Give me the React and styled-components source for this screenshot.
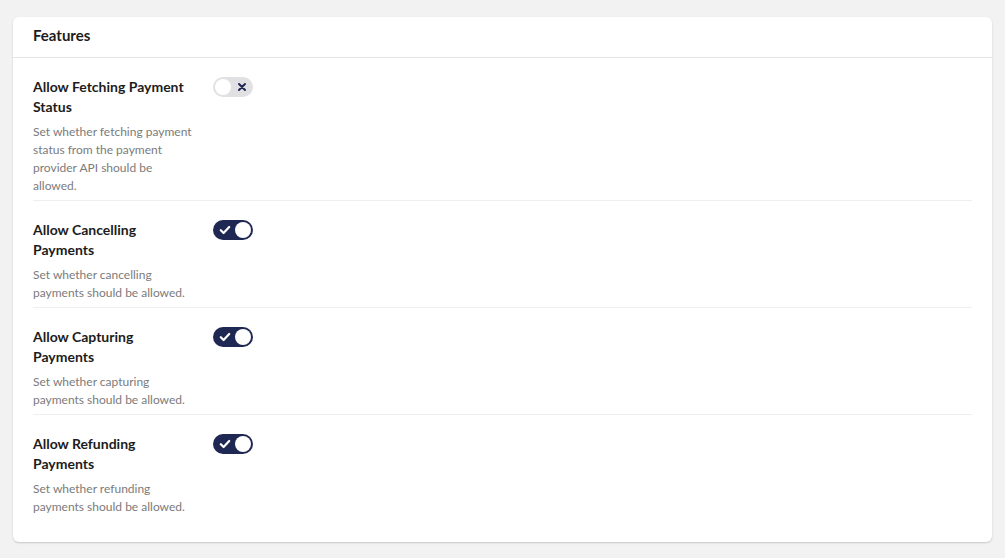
import styled, { createGlobalStyle } from "styled-components";

const GlobalStyle = createGlobalStyle`
	body {
		margin: 0;
		background: #f3f2f2;
		font-family: Lato, "Open Sans", sans-serif;
		color: #1a1a1a;
	}
`;

const Page = styled.div`
	padding: 17px 13px 16px 13px;
`;

const Card = styled.section`
	background: #fff;
	border-radius: 6px;
	box-shadow: 0 1px 2px rgba(0, 0, 0, 0.18);
	padding-bottom: 20px;
`;

const CardHeader = styled.header`
	height: 41px;
	box-sizing: border-box;
	display: flex;
	align-items: center;
	padding: 0 20px 5px;
	border-bottom: 1px solid #e6e4e4;
	font-size: 15px;
	font-weight: 700;
	color: #1c1c1c;
`;

const List = styled.div`
	padding: 0 20px;
`;

const Row = styled.div`
	display: flex;
	align-items: flex-start;
	gap: 20px;
	padding: 19px 0 5px;
	border-bottom: 1px solid ${(p) => (p.$last ? "transparent" : "#efeeee")};
`;

const Info = styled.div`
	width: 160px;
	flex-shrink: 0;
`;

const Title = styled.div`
	font-size: 14px;
	font-weight: 700;
	line-height: 20px;
	color: #1c1c1c;
`;

const Desc = styled.p`
	margin: 6px 0 0;
	font-size: 12px;
	line-height: 18px;
	color: #7b7b7b;
`;

const Track = styled.button`
	position: relative;
	width: 40px;
	height: 20px;
	border: none;
	border-radius: 10px;
	padding: 0;
	cursor: pointer;
	background: ${(p) => (p.$on ? "#1f2852" : "#e1e1e3")};
	flex-shrink: 0;

	svg {
		position: absolute;
		top: 5px;
		left: ${(p) => (p.$on ? "6px" : "24px")};
	}
`;

const Knob = styled.span`
	position: absolute;
	top: 2px;
	left: ${(p) => (p.$on ? "22px" : "2px")};
	width: 16px;
	height: 16px;
	border-radius: 50%;
	background: #fff;
`;

function Toggle({ on }) {
	return (
		<Track $on={on} aria-pressed={on}>
			{on ? (
				<svg width="12" height="10" viewBox="0 0 12 10">
					<path d="M1.8 5.2 L4.6 8 L10.2 2" fill="none" stroke="#fff" strokeWidth="2.2" strokeLinecap="round" strokeLinejoin="round" />
				</svg>
			) : (
				<svg width="10" height="10" viewBox="0 0 10 10">
					<path d="M2 2 L8 8 M8 2 L2 8" fill="none" stroke="#1f2852" strokeWidth="2" strokeLinecap="round" />
				</svg>
			)}
			<Knob $on={on} />
		</Track>
	);
}

const features = [
	{
		title: "Allow Fetching Payment Status",
		desc: "Set whether fetching payment status from the payment provider API should be allowed.",
		on: false,
	},
	{
		title: "Allow Cancelling Payments",
		desc: "Set whether cancelling payments should be allowed.",
		on: true,
	},
	{
		title: "Allow Capturing Payments",
		desc: "Set whether capturing payments should be allowed.",
		on: true,
	},
	{
		title: "Allow Refunding Payments",
		desc: "Set whether refunding payments should be allowed.",
		on: true,
	},
];

export default function App() {
	return (
		<>
			<GlobalStyle />
			<Page>
				<Card>
					<CardHeader>Features</CardHeader>
					<List>
						{features.map((f, i) => (
							<Row key={f.title} $last={i === features.length - 1}>
								<Info>
									<Title>{f.title}</Title>
									<Desc>{f.desc}</Desc>
								</Info>
								<Toggle on={f.on} />
							</Row>
						))}
					</List>
				</Card>
			</Page>
		</>
	);
}
